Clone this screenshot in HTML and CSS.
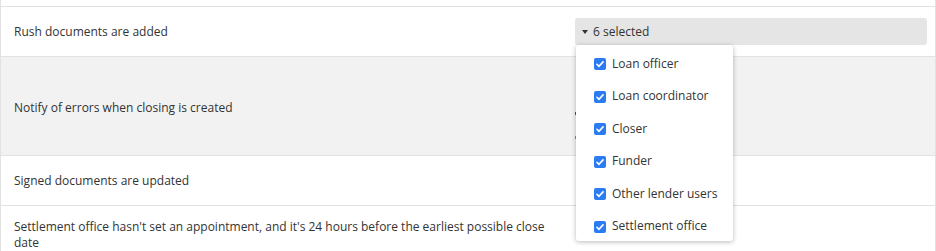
FILE: index.html
```html
<!DOCTYPE html>
<html>
<head>
<meta charset="utf-8">
<link rel="stylesheet" href="styles.css">
</head>
<body>
<div class="table">
  <div class="row row-stub"></div>
  <div class="row row-single">
    <div class="label">Rush documents are added</div>
    <div class="value">
      <div class="select">
        <span class="caret"></span>
        <span>6 selected</span>
      </div>
      <div class="menu">
        <label class="item"><span class="check"><svg viewBox="0 0 13 13"><path d="M3.2 6.8 L5.4 9 L9.8 4.2" fill="none" stroke="#fff" stroke-width="1.8" stroke-linecap="round" stroke-linejoin="round"/></svg></span>Loan officer</label>
        <label class="item"><span class="check"><svg viewBox="0 0 13 13"><path d="M3.2 6.8 L5.4 9 L9.8 4.2" fill="none" stroke="#fff" stroke-width="1.8" stroke-linecap="round" stroke-linejoin="round"/></svg></span>Loan coordinator</label>
        <label class="item"><span class="check"><svg viewBox="0 0 13 13"><path d="M3.2 6.8 L5.4 9 L9.8 4.2" fill="none" stroke="#fff" stroke-width="1.8" stroke-linecap="round" stroke-linejoin="round"/></svg></span>Closer</label>
        <label class="item"><span class="check"><svg viewBox="0 0 13 13"><path d="M3.2 6.8 L5.4 9 L9.8 4.2" fill="none" stroke="#fff" stroke-width="1.8" stroke-linecap="round" stroke-linejoin="round"/></svg></span>Funder</label>
        <label class="item"><span class="check"><svg viewBox="0 0 13 13"><path d="M3.2 6.8 L5.4 9 L9.8 4.2" fill="none" stroke="#fff" stroke-width="1.8" stroke-linecap="round" stroke-linejoin="round"/></svg></span>Other lender users</label>
        <label class="item"><span class="check"><svg viewBox="0 0 13 13"><path d="M3.2 6.8 L5.4 9 L9.8 4.2" fill="none" stroke="#fff" stroke-width="1.8" stroke-linecap="round" stroke-linejoin="round"/></svg></span>Settlement office</label>
      </div>
    </div>
  </div>
  <div class="row row-tall shaded">
    <div class="label">Notify of errors when closing is created</div>
    <div class="value hidden-list">
      <span class="mark mark-dark"></span>
      <span class="mark mark-blue"></span>
    </div>
  </div>
  <div class="row row-single">
    <div class="label">Signed documents are updated</div>
    <div class="value"></div>
  </div>
  <div class="row row-last">
    <div class="label">Settlement office hasn't set an appointment, and it's 24 hours before the earliest possible close date</div>
    <div class="value"></div>
  </div>
</div>
</body>
</html>
```

FILE: styles.css
```css
html, body {
  margin: 0;
  padding: 0;
  background: #fff;
}
body {
  font-family: "Open Sans", "Liberation Sans", sans-serif;
  font-size: 12px;
  color: #333;
  width: 936px;
  height: 251px;
  overflow: hidden;
}
.table {
  width: 934px;
  border-left: 1px solid #e2e2e2;
  border-right: 1px solid #e2e2e2;
}
.row {
  display: grid;
  grid-template-columns: 574px 1fr;
  border-bottom: 1px solid #e2e2e2;
  align-items: center;
}
.row-stub {
  height: 6px;
}
.row-single {
  height: 49px;
}
.row-tall {
  height: 98px;
}
.shaded {
  background: #f2f2f2;
}
.row-last {
  align-items: start;
  padding-top: 13px;
  height: 40px;
}
.label {
  padding: 0 12px 0 13px;
  line-height: 16px;
}
.row-tall .label {
  padding-top: 3px;
}
.value {
  position: relative;
  box-sizing: border-box;
  padding-right: 8px;
  height: 100%;
  display: flex;
  align-items: center;
}
.select {
  flex: 1;
  height: 27px;
  background: #e5e5e5;
  border-radius: 3px;
  display: flex;
  align-items: center;
  gap: 5px;
  padding-left: 7px;
  color: #333;
}
.caret {
  width: 0;
  height: 0;
  border-left: 3.5px solid transparent;
  border-right: 3.5px solid transparent;
  border-top: 4px solid #333;
  margin-top: 1px;
}
.menu {
  position: absolute;
  left: 1px;
  top: 38px;
  width: 157px;
  background: #fff;
  border-radius: 3px;
  box-shadow: 0 1px 5px rgba(0, 0, 0, 0.28);
  padding: 2px 0 0;
  height: 194px;
  z-index: 10;
}
.item {
  height: 32.5px;
  display: flex;
  align-items: center;
  padding-left: 18px;
  gap: 6px;
  color: #333;
}
.check {
  width: 12px;
  height: 12px;
  border-radius: 2px;
  background: #2b7bf2;
  display: flex;
  margin-top: 2px;
}
.check svg {
  width: 12px;
  height: 12px;
}
.hidden-list {
  flex-direction: column;
  align-items: flex-start;
  justify-content: flex-start;
  padding-top: 55px;
  gap: 21px;
}
.mark {
  display: block;
  width: 3px;
  height: 3px;
}
.mark-dark {
  background: #555;
}
.mark-blue {
  background: #6c8fd0;
}
```
